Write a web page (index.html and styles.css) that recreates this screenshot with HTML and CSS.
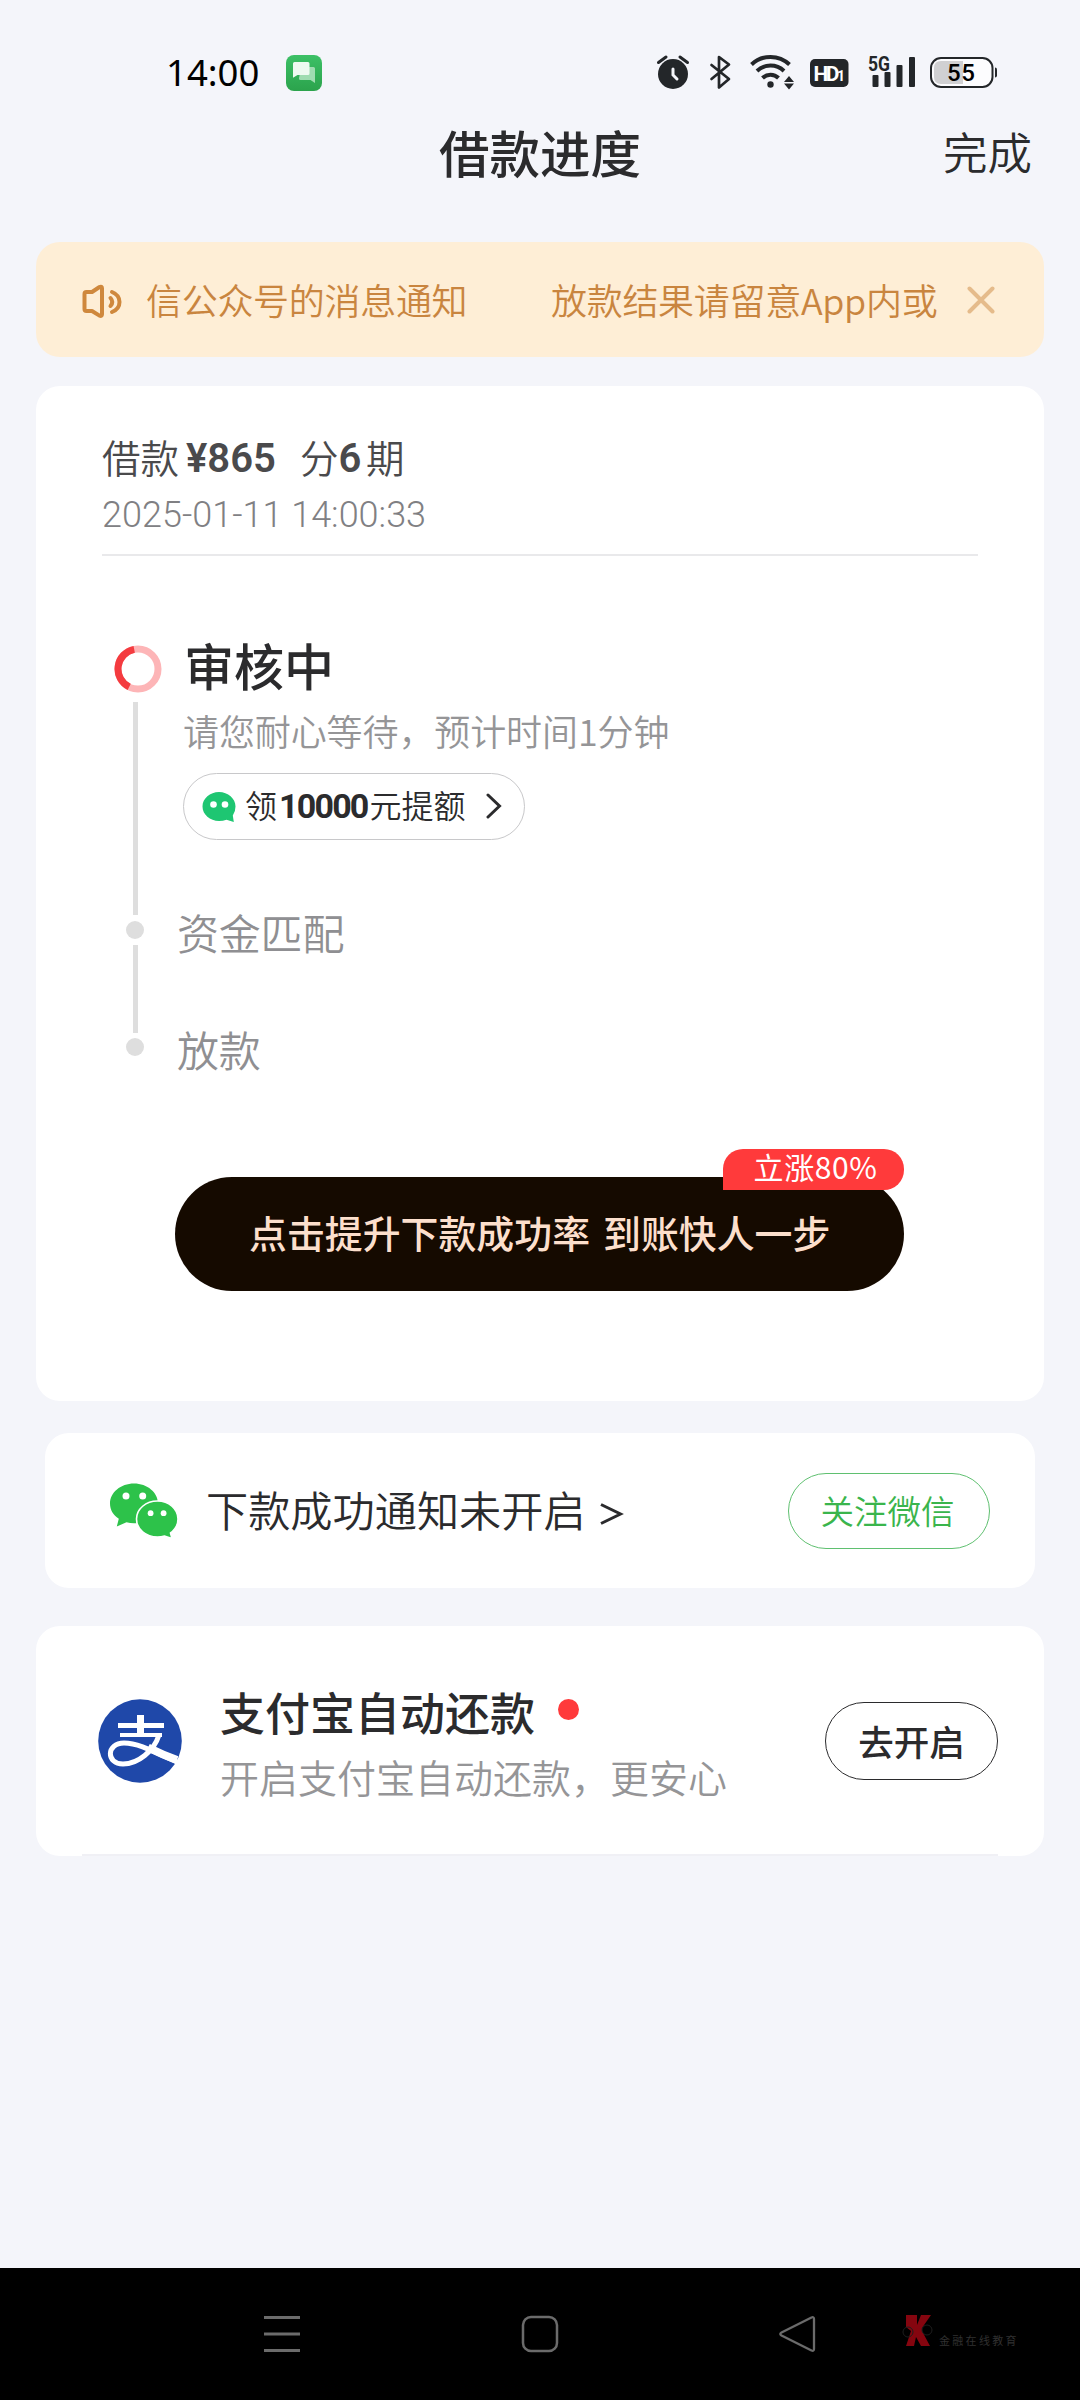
FILE: index.html
```html
<!DOCTYPE html>
<html lang="zh-CN">
<head>
<meta charset="utf-8">
<title>借款进度</title>
<link rel="stylesheet" href="styles.css">
</head>
<body>
<div class="screen">
  <div class="status">
    <span class="clock">14:00</span>
    <svg class="msg" width="36" height="36" viewBox="0 0 36 36">
      <defs><linearGradient id="g" x1="0" y1="0" x2="0" y2="1"><stop offset="0" stop-color="#3cc066"/><stop offset="1" stop-color="#2ba34c"/></linearGradient></defs>
      <rect width="36" height="36" rx="8" fill="url(#g)"/>
      <path d="M15 12h12.500q1.500 0 1.500 1.500V28l-4.500-3H14.500q-1.500 0-1.500-1.500z" fill="#9fdcb1"/>
      <path d="M8.500 7H22q1.500 0 1.500 1.500v10q0 1.500-1.500 1.500H11.500L7 22.800V8.500Q7 7 8.500 7z" fill="#eefaf1"/>
    </svg>
    <svg class="sys" width="346" height="40" viewBox="654 52 346 40">
      <g fill="#232629" stroke="none">
        <circle cx="673" cy="74" r="15"/>
        <path d="M658.500 62.500l7.500-5.500M687.500 62.500l-7.500-5.500" stroke="#232629" stroke-width="3" stroke-linecap="round"/>
        <path d="M673 69v6l4 4" fill="none" stroke="#f4f5fa" stroke-width="3" stroke-linecap="round"/>
        <path d="M711.500 65l17.500 14-10 8.500V57l10 7.500-17.500 14.500" fill="none" stroke="#232629" stroke-width="2.700" stroke-linejoin="round" stroke-linecap="round"/>
        <g fill="none" stroke="#232629" stroke-width="4">
          <path d="M751.500 64.500a27.500 27.500 0 0 1 38 0"/>
          <path d="M757 71a19.500 19.500 0 0 1 27 0"/>
          <path d="M762.500 78a11.500 11.500 0 0 1 16 0"/>
        </g>
        <circle cx="770.500" cy="84.500" r="3.200"/>
        <path d="M789 76l5 6h-10zM789 89.500l5-6h-10z"/>
        <rect x="810" y="59" width="38.500" height="28" rx="5"/>
        <rect x="872.500" y="75" width="6" height="12" rx="1"/>
        <rect x="884.500" y="72" width="6" height="15" rx="1"/>
        <rect x="896.500" y="65" width="6" height="22" rx="1"/>
        <rect x="909" y="57" width="6" height="30" rx="1"/>
        <path d="M995 67.500q2 0 2 2v6q0 2-2 2z"/>
      </g>
      <text class="hd" x="813.500" y="81">HD<tspan class="hd1">1</tspan></text>
      <text class="g5" x="868" y="70.500" textLength="22" lengthAdjust="spacingAndGlyphs">5G</text>
      <rect x="931" y="58" width="61.500" height="29" rx="10" fill="#fcfcfe" stroke="#232629" stroke-width="2"/>
      <path d="M941 61h22v23h-22q-7 0-7-7v-9q0-7 7-7z" fill="#d0d0d2"/>
      <text class="bat" x="961" y="81" text-anchor="middle" textLength="28">55</text>
    </svg>
  </div>

  <header class="head">
    <h1>借款进度</h1>
    <span class="done">完成</span>
  </header>

  <div class="notice">
    <svg width="44" height="36" viewBox="0 0 44 36" fill="none" stroke="#cf883d" stroke-width="4" stroke-linecap="round" stroke-linejoin="round">
      <path d="M5.500 12q0-2 2-2H13l7.500-5q2.500-1 2.500 1.300v26q0 2.300-2.500 1.300L13 29H7.500q-2 0-2-2z"/>
      <path d="M31.500 16q3.500 4 0 8M33 10q7.500 3 7.500 10T33 30"/>
    </svg>
    <div class="marquee"><span class="m1">信公众号的消息通知</span><span class="m2">放款结果请留意<i>App</i>内或</span></div>
    <svg class="close" width="28" height="28" viewBox="0 0 28 28" stroke="#e5bb8b" stroke-width="4" stroke-linecap="round"><path d="M2.500 2.500l23 23M25.500 2.500l-23 23"/></svg>
  </div>

  <main class="card progress">
    <div class="loan">借款<b class="amt">¥865</b><span class="term">分<b>6</b></span><span>期</span></div>
    <div class="date">2025-01-11 14:00:33</div>
    <div class="rule"></div>

    <div class="steps">
      <div class="step s1">
        <div class="mark">
          <svg class="ring" width="48" height="48" viewBox="0 0 48 48" fill="none" stroke-width="7"><circle cx="24" cy="24" r="20" stroke="#fdb5b7"/><path d="M20.200 4.360A20 20 0 0 0 15.200 41.960" stroke="#f43b3f"/></svg>
          <div class="line"></div>
        </div>
        <div class="info">
          <h2>审核中</h2>
          <p>请您耐心等待，预计时间<i>1</i>分钟</p>
          <div class="pill">
            <svg width="34" height="32" viewBox="0 0 34 32"><path d="M17 1C8 1 .5 7.500.5 15.500S8 30 17 30q4 0 7.500-1.300l7.300 2.300-1-6.500q2.700-3.800 2.700-9C33.500 7.500 26 1 17 1z" fill="#1ec672"/><circle cx="11.500" cy="13.500" r="3.300" fill="#fff"/><circle cx="23" cy="13.500" r="3.300" fill="#fff"/></svg>
            <span>领<b>10000</b>元提额</span>
            <svg class="chev" width="16" height="26" viewBox="0 0 16 26" fill="none" stroke="#2b2b2d" stroke-width="3" stroke-linecap="round"><path d="M2 2l11.500 11L2 24"/></svg>
          </div>
        </div>
      </div>
      <div class="step s2">
        <div class="mark"><div class="dot"></div><div class="line"></div></div>
        <div class="label">资金匹配</div>
      </div>
      <div class="step s3">
        <div class="mark"><div class="dot"></div></div>
        <div class="label">放款</div>
      </div>
    </div>

    <div class="cta"><span class="t1">点击提升下款成功率</span><span class="t2">到账快人一步</span><em>立涨80%</em></div>
  </main>

  <section class="card wechat">
    <svg width="70" height="56" viewBox="0 0 70 56" fill="#2dc24a">
      <path d="M25 .5C11.700.500 1 9.500 1 20.500c0 6.300 3.300 11.700 8.800 15.300L7.800 43.500l9.700-4.200q3.500 1 7.500 1c13.300 0 24-8.800 24-19.800S38.300.500 25 .5z"/>
      <path d="M48.500 18c-11.600 0-21 8-21 18s9.400 18 21 18q3.700 0 7-.9l7.500 2.400-1.500-5.500c4.500-3.300 7.500-8.300 7.500-14 0-10-9.200-18-20.500-18z" stroke="#fff" stroke-width="1.600"/>
      <g fill="#fff"><circle cx="17" cy="13" r="3.500"/><circle cx="33.700" cy="13" r="3.500"/><circle cx="41.600" cy="30.200" r="2.900"/><circle cx="54.600" cy="30.200" r="2.900"/></g>
    </svg>
    <span class="wtext">下款成功通知未开启</span>
    <svg class="gt" width="26" height="24" viewBox="0 0 26 24" fill="none" stroke="#2b2b2d" stroke-width="3"><path d="M2 2.500l19.500 9.500L2 21.500"/></svg>
    <div class="follow">关注微信</div>
  </section>

  <section class="card alipay">
    <svg width="84" height="84" viewBox="0 0 84 84">
      <circle cx="42" cy="42" r="41.800" fill="#1f48a9"/>
      <g fill="none" stroke="#fff">
        <path d="M20 26.500h46" stroke-width="5"/>
        <path d="M42.500 16v21" stroke-width="7"/>
        <path d="M22 36h42" stroke-width="4"/>
        <path d="M61 36C56 52 40 65 25 65c-17 0-17-21 1-21 16 0 34 11 53 19" stroke-width="5"/>
        <path d="M50 48.500q14 7 29 12.500" stroke-width="8"/>
      </g>
    </svg>
    <div class="atext">
      <h3>支付宝自动还款<span class="red"></span></h3>
      <p>开启支付宝自动还款，更安心</p>
    </div>
    <div class="open">去开启</div>
    <div class="base"></div>
  </section>

  <nav class="nav">
    <svg width="38" height="40" viewBox="0 0 38 40" stroke="#6b6b6b" stroke-width="2.800"><path d="M1 3.500h36M1 20h36M1 36.500h36"/></svg>
    <svg width="38" height="40" viewBox="0 0 38 40" fill="none" stroke="#6b6b6b" stroke-width="2.500"><rect x="2" y="3" width="34" height="34" rx="8"/></svg>
    <svg width="38" height="40" viewBox="0 0 38 40" fill="none" stroke="#6b6b6b" stroke-width="2.300" stroke-linejoin="round"><path d="M32.500 3.500Q35 2.500 35 5v30q0 2.500-2.500 1.500L2.500 21.500q-2.500-1.500 0-3z"/></svg>
    <div class="mk">
      <svg width="32" height="36" viewBox="0 0 32 36"><path d="M4 2h11v10l4-10h10l-9 13v3l8 15h-9l-5-9-2 9H4l5-15-5-4z" fill="#85050f"/><g fill="none" stroke="#1e1e1e"><circle cx="6" cy="19" r="5"/><circle cx="25" cy="17" r="5"/></g></svg>
      <span>金融在线教育</span>
    </div>
  </nav>
</div>
</body>
</html>
```
FILE: styles.css
```css
* { box-sizing: border-box; margin: 0; padding: 0; }
body {
  background: #f4f5fa;
  font-family: "Noto Sans CJK SC", sans-serif;
  color: #2b2b2d;
}
i, em { font-style: normal; }
svg { display: block; flex: none; }
.screen { width: 1080px; height: 2400px; display: flex; flex-direction: column; overflow: hidden; }

.status { display: flex; height: 108px; padding: 52px 80px 0 166px; flex: none; }
.clock { font: 400 36.500px/42px "Noto Sans", sans-serif; color: #000; width: 120px; white-space: nowrap; margin-top: -1px; }
.msg { margin-top: 3px; }
.sys { margin-left: auto; }
.hd, .hd1, .g5, .bat { font-family: "Roboto", sans-serif; font-weight: 700; }
.hd { font-size: 21px; letter-spacing: -2.500px; fill: #fff; }
.hd1 { font-size: 14px; }
.g5 { font-size: 21px; fill: #232629; }
.bat { font-size: 24px; font-weight: 500; fill: #000; }

.head { display: grid; grid-template-columns: 1fr auto 1fr; align-items: center; height: 86px; padding: 0 48px; flex: none; }
h1 { grid-column: 2; font-weight: 500; font-size: 50.500px; line-height: 80px; }
.done { justify-self: end; font-size: 44.500px; line-height: 80px; font-weight: 350; }

.notice { margin: 48px 36px 0; height: 115px; border-radius: 24px; background: #feeed6; display: flex; align-items: center; padding-left: 43px; flex: none; }
.marquee { margin-left: 23px; width: 792px; display: flex; overflow: hidden; white-space: nowrap; font-size: 36px; line-height: 54px; padding-bottom: 1px; font-weight: 350; color: #c9853f; }
.m1 { width: 405px; flex: none; letter-spacing: -0.300px; }
.m2 { flex: none; letter-spacing: -0.300px; }
.close { margin-left: 29px; }

.card { background: #fff; border-radius: 24px; margin: 0 36px; flex: none; }
.progress { margin-top: 29px; height: 1015px; padding: 42px 66px 0; display: flex; flex-direction: column; }
.loan { display: flex; height: 56px; font-size: 38.500px; line-height: 56px; font-weight: 350; color: #4a4a4c; }
.loan b { font: 600 40px/62px "Roboto", sans-serif; }
.amt { margin-left: 7px; width: 114px; }
.term { display: flex; width: 66px; }
.date { font: 300 36px/50px "Roboto", sans-serif; letter-spacing: 0; color: #808083; margin-top: 6px; }
.rule { height: 2px; background: #e9e9eb; margin-top: 14px; }

.steps { margin-top: 89px; padding-left: 10px; }
.step { display: flex; }
.mark { width: 48px; display: flex; flex-direction: column; flex: none; }
.ring { margin-left: 2px; }
.line { width: 5px; background: #dedede; margin-left: 20.500px; }
.dot { width: 18px; height: 18px; border-radius: 50%; background: #dedede; margin-left: 14px; }
.s1 { height: 276px; }
.s1 .line { margin-top: 9px; height: 213px; }
.info { margin-left: 23px; }
h2 { font-size: 50px; line-height: 56px; font-weight: 500; margin: -9px 0 0 1px; }
.info p { font-size: 36px; line-height: 50px; font-weight: 350; color: #959597; margin-top: 13px; letter-spacing: -0.100px; }
.pill { margin-top: 18px; width: 342px; height: 67px; border: 1.500px solid #c8c8ca; border-radius: 34px; display: flex; align-items: center; padding-left: 18px; font-size: 32px; font-weight: 350; white-space: nowrap; }
.pill span { margin-left: 9px; line-height: 44px; margin-bottom: 3px; }
.pill b { font: 700 34px/44px "Roboto", sans-serif; letter-spacing: -1.800px; margin: 0 2px 0 2px; }
.chev { margin-left: 20px; margin-bottom: 2px; }
.s2 { height: 117px; }
.s2 .line { margin-top: 6px; height: 88px; }
.label { margin-left: 17px; font-size: 42px; line-height: 60px; font-weight: 350; color: #8f8f92; margin-top: -19px; height: 60px; letter-spacing: -0.200px; }
.s3 { height: 60px; }

.cta { position: relative; margin: 79px 0 0 73px; width: 729px; height: 114px; border-radius: 57px; background: #150a00; color: #fcdfcc; font-size: 37.900px; font-weight: 500; line-height: 54px; display: flex; align-items: center; padding: 0 0 5px 74px; white-space: nowrap; }
.t1 { width: 354px; }
.cta em { position: absolute; right: 0; top: -28px; width: 181px; height: 41px; border-radius: 20px 20px 20px 0; background: #ff3a3b; color: #fff; font-size: 30px; font-weight: 400; line-height: 35px; text-align: center; padding-left: 4px; letter-spacing: 0.600px; }

.wechat { margin: 32px 45px 0; height: 155px; display: flex; align-items: center; padding: 0 45px 0 64px; }
.wtext { margin: -4px 0 0 27px; font-size: 42.200px; line-height: 60px; font-weight: 350; }
.gt { margin: 7px 0 0 13px; }
.follow { margin-left: auto; width: 202px; height: 76px; border: 1.500px solid #5fc070; border-radius: 38px; color: #3ab54c; font-size: 33.500px; font-weight: 350; line-height: 72px; text-align: center; padding-right: 3px; }

.alipay { margin-top: 38px; height: 230px; display: grid; grid-template-columns: 84px 1fr 173px; grid-template-rows: 228px 2px; align-items: center; padding: 0 46px 0 62px; }
.alipay > svg { margin-top: 2px; }
.atext { margin-left: 38px; }
h3 { display: flex; align-items: center; font-size: 45px; line-height: 60px; font-weight: 500; white-space: nowrap; margin-top: 5px; }
.red { width: 21px; height: 21px; border-radius: 50%; background: #ff3a3b; margin: -4px 0 0 23px; }
.atext p { font-size: 39px; line-height: 56px; font-weight: 350; color: #959597; margin-top: 6px; white-space: nowrap; }
.open { height: 78px; border: 1.500px solid #2b2b2d; border-radius: 39px; font-size: 35.500px; line-height: 76px; font-weight: 500; text-align: center; margin-top: 2px; }
.base { grid-column: 1 / -1; margin-left: -16px; height: 2px; background: #f0f0f5; }

.nav { position: relative; margin-top: auto; height: 132px; background: #000; display: flex; align-items: center; padding-left: 263px; gap: 220px; flex: none; }
.mk { display: flex; margin-left: -135px; margin-top: -7px; }
.mk span { font-size: 11px; letter-spacing: 2.300px; line-height: 16px; color: #303030; margin: 19px 0 0 5px; white-space: nowrap; }
```
